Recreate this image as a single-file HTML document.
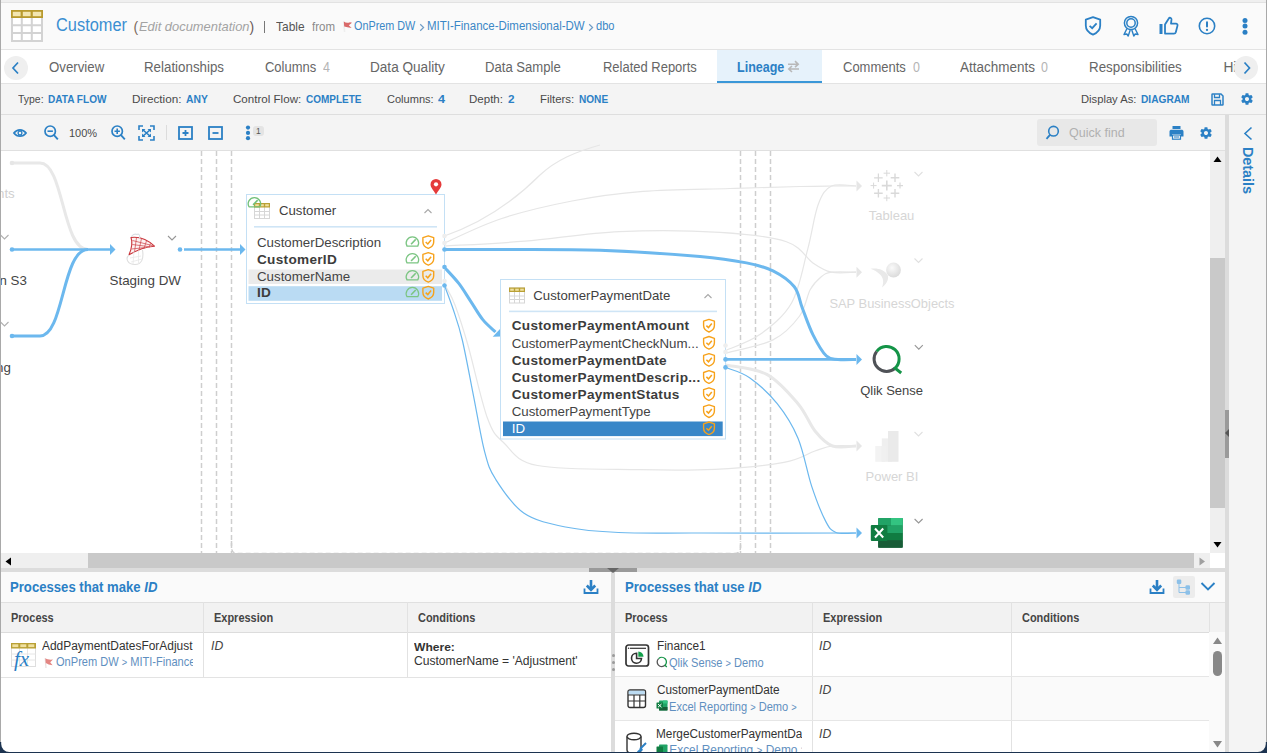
<!DOCTYPE html>
<html><head><meta charset="utf-8">
<style>
*{margin:0;padding:0;box-sizing:border-box}
html,body{width:1267px;height:753px;overflow:hidden;background:#1d3350;font-family:"Liberation Sans",sans-serif}
#app{position:absolute;left:0;top:0;width:1267px;height:753px;background:#fafafa;overflow:hidden}
.a{position:absolute}
.t{position:absolute;white-space:nowrap;line-height:1}
.blue{color:#2b80c5}
.ico{position:absolute;overflow:visible}
</style></head><body>
<div id="app">
  <!-- top strip -->
  <div class="a" style="left:0;top:0;width:1267px;height:2px;background:#efefef"></div>
  <div class="a" style="left:0;top:2px;width:1267px;height:1px;background:#e2e2e2"></div>
  <!-- header -->
  <div class="a" style="left:0;top:3px;width:1267px;height:46px;background:#fafafa"></div>
  <div class="a" style="left:0;top:49px;width:1267px;height:1px;background:#e3e3e3"></div>
  <!-- tab bar -->
  <div class="a" style="left:0;top:50px;width:1267px;height:33px;background:#fff"></div>
  <div class="a" style="left:0;top:83px;width:1267px;height:1px;background:#e3e3e3"></div>
  <!-- filter bar -->
  <div class="a" style="left:0;top:84px;width:1267px;height:30px;background:#f4f4f4"></div>
  <div class="a" style="left:0;top:114px;width:1267px;height:1px;background:#dedede"></div>
  <!-- toolbar -->
  <div class="a" style="left:0;top:115px;width:1225px;height:35px;background:#f4f4f4"></div>
  <div class="a" style="left:0;top:150px;width:1225px;height:1px;background:#e0e0e0"></div>
  <!-- diagram -->
  <div class="a" id="diagram" style="left:0;top:151px;width:1210px;height:402px;background:#fff;overflow:hidden"></div>
<!--DIAGRAM-->
<svg class="ico" style="left:0;top:151px" width="1210" height="402" viewBox="0 151 1210 402">
<line x1="201.5" y1="151" x2="201.5" y2="553" stroke="#cecece" stroke-width="1.5" stroke-dasharray="5 3"/>
<line x1="216.5" y1="151" x2="216.5" y2="553" stroke="#cecece" stroke-width="1.5" stroke-dasharray="5 3"/>
<line x1="231.5" y1="151" x2="231.5" y2="553" stroke="#cecece" stroke-width="1.5" stroke-dasharray="5 3"/>
<line x1="740.5" y1="151" x2="740.5" y2="553" stroke="#cecece" stroke-width="1.5" stroke-dasharray="5 3"/>
<line x1="755.5" y1="151" x2="755.5" y2="553" stroke="#cecece" stroke-width="1.5" stroke-dasharray="5 3"/>
<line x1="770.5" y1="151" x2="770.5" y2="553" stroke="#cecece" stroke-width="1.5" stroke-dasharray="5 3"/>
<path d="M231.5,541 V547 Q231.5,553.5 237.5,553.5 H734.5 Q740.5,553.5 740.5,547 V541" fill="none" stroke="#cecece" stroke-width="1.5" stroke-dasharray="5 3"/>
<path d="M444.5,243.0 C453.9,238.9 479.8,225.7 501.0,218.7 C522.2,211.7 548.3,205.6 572.0,201.0 C595.7,196.4 616.7,193.5 643.0,191.4 C669.3,189.3 703.8,189.3 730.0,188.5 C756.2,187.7 783.1,186.9 800.0,186.5 C816.9,186.1 822.2,186.1 831.5,186.0 C840.8,185.9 851.9,186.0 856.0,186.0" fill="none" stroke="#e6e6e6" stroke-width="1.2"/>
<path d="M444.5,246.0 C457.9,245.2 495.6,243.6 524.7,241.2 C553.9,238.8 586.9,233.2 619.4,231.7 C651.9,230.2 692.2,230.7 720.0,232.4 C747.8,234.1 770.9,236.6 786.4,241.7 C801.9,246.8 805.4,257.8 812.9,262.9 C820.4,268.0 824.3,270.6 831.5,272.2 C838.7,273.8 851.9,272.2 856.0,272.2" fill="none" stroke="#e6e6e6" stroke-width="1.2"/>
<path d="M725.5,350.5 C731.2,347.9 748.8,342.6 759.8,334.6 C770.8,326.6 783.7,316.9 791.7,302.7 C799.7,288.5 803.2,266.0 807.6,249.6 C812.0,233.2 814.2,215.1 818.2,204.5 C822.2,193.9 825.2,189.1 831.5,186.0 C837.8,182.9 851.9,186.0 856.0,186.0" fill="none" stroke="#e6e6e6" stroke-width="1.2"/>
<path d="M725.5,353.2 C733.4,351.0 760.6,346.1 773.0,339.9 C785.4,333.7 793.4,324.4 799.6,316.0 C805.8,307.6 806.7,296.0 810.3,289.5 C813.9,283.0 817.5,279.9 821.0,277.0 C824.5,274.1 825.7,273.0 831.5,272.2 C837.3,271.4 851.9,272.2 856.0,272.2" fill="none" stroke="#e6e6e6" stroke-width="1.2"/>
<path d="M446.0,287.0 C447.5,290.0 451.4,295.3 455.0,305.0 C458.6,314.7 462.5,326.2 467.9,345.0 C473.3,363.8 481.4,401.7 487.4,418.0 C493.4,434.3 495.6,435.1 504.0,443.0 C512.4,450.9 514.9,461.1 537.6,465.5 C560.3,469.9 610.4,469.1 640.0,469.7 C669.6,470.3 691.0,470.5 715.0,469.3 C739.0,468.1 767.3,465.4 784.0,462.4 C800.7,459.3 806.9,453.7 815.0,451.0 C823.1,448.3 825.7,446.8 832.5,446.0 C839.3,445.2 852.1,446.0 856.0,446.0" fill="none" stroke="#e6e6e6" stroke-width="1.2"/>
<path d="M444.5,236 C485,222 515,200 540,175 C556,160 575,152 600,145" fill="none" stroke="#e6e6e6" stroke-width="1.2"/>
<path d="M12,163 H40 C64,163 62,249.5 88,249.5" fill="none" stroke="#e8e8e8" stroke-width="3"/>
<path d="M725.5,365.0 C732.4,366.6 754.7,367.9 766.8,374.3 C778.9,380.8 789.9,394.2 798.0,403.7 C806.1,413.2 809.5,424.2 815.2,431.3 C821.0,438.4 825.7,443.6 832.5,446.0 C839.3,448.4 852.1,446.0 856.0,446.0" fill="none" stroke="#e8e8e8" stroke-width="3"/>
<path d="M856.5,180.5 L862,186 L856.5,191.5 Z" fill="#e6e6e6" transform="rotate(0 862 186)"/>
<path d="M856.5,266.7 L862,272.2 L856.5,277.7 Z" fill="#e6e6e6" transform="rotate(0 862 272.2)"/>
<path d="M856.5,440.5 L862,446 L856.5,451.5 Z" fill="#e6e6e6" transform="rotate(0 862 446)"/>
<path d="M12,336 H40 C64,336 62,249.5 88,249.5" fill="none" stroke="#6cb8ee" stroke-width="3"/>
<path d="M12,249.5 H110" fill="none" stroke="#6cb8ee" stroke-width="2.6"/>
<path d="M110.0,244.0 L115.5,249.5 L110.0,255.0 Z" fill="#6cb8ee" transform="rotate(0 115.5 249.5)"/>
<path d="M184,249.5 H240" fill="none" stroke="#6cb8ee" stroke-width="2.6"/>
<path d="M240.0,244.0 L245.5,249.5 L240.0,255.0 Z" fill="#6cb8ee" transform="rotate(0 245.5 249.5)"/>
<path d="M444.5,249.5 C453.8,249.5 474.1,249.4 500.0,249.5 C525.9,249.6 566.7,249.1 600.0,250.3 C633.3,251.5 675.6,254.4 700.0,256.5 C724.4,258.6 734.3,260.5 746.5,262.9 C758.7,265.3 765.0,266.9 773.0,270.9 C781.0,274.9 789.4,280.6 794.3,286.8 C799.2,293.0 799.2,300.0 802.3,308.0 C805.4,316.0 808.9,326.6 812.9,334.6 C816.9,342.6 822.0,351.7 826.2,355.8 C830.4,359.9 833.0,358.8 838.0,359.4 C843.0,360.0 853.0,359.4 856.0,359.4" fill="none" stroke="#6cb8ee" stroke-width="3"/>
<path d="M445.5,268.5 C447.8,271.0 454.8,278.2 459.0,283.7 C463.2,289.2 466.9,295.6 470.9,301.6 C474.9,307.6 478.7,314.5 482.8,319.6 C486.9,324.7 493.4,329.9 495.5,332.0" fill="none" stroke="#6cb8ee" stroke-width="3"/>
<path d="M495.0,331.0 L500.5,336.5 L495.0,342.0 Z" fill="#6cb8ee" transform="rotate(43 500.5 336.5)"/>
<path d="M725.5,359.4 H856" fill="none" stroke="#6cb8ee" stroke-width="2.6"/>
<path d="M856.5,353.9 L862,359.4 L856.5,364.9 Z" fill="#6cb8ee" transform="rotate(0 862 359.4)"/>
<path d="M444.5,285.5 C445.9,289.4 450.0,299.7 453.0,308.8 C456.0,317.9 458.9,325.5 462.3,340.0 C465.7,354.5 469.8,377.2 473.5,395.8 C477.2,414.4 480.9,437.7 484.6,451.6 C488.3,465.6 489.3,469.3 495.8,479.5 C502.3,489.7 512.1,505.1 523.7,513.0 C535.3,520.9 549.7,523.8 565.5,527.0 C581.3,530.2 596.1,531.5 618.5,532.5 C640.9,533.5 660.4,532.9 700.0,533.0 C739.6,533.1 830.0,533.0 856.0,533.0" fill="none" stroke="#6cb8ee" stroke-width="1.2"/>
<path d="M725.5,367.4 C729.5,369.1 741.0,371.6 749.6,377.7 C758.2,383.8 769.1,393.6 777.2,403.7 C785.3,413.8 792.2,424.4 798.0,438.2 C803.8,452.0 807.2,472.8 811.8,486.6 C816.4,500.4 821.6,513.5 825.6,521.1 C829.6,528.8 830.9,530.5 836.0,532.5 C841.1,534.5 852.7,532.9 856.0,533.0" fill="none" stroke="#6cb8ee" stroke-width="1.2"/>
<path d="M856.5,527.5 L862,533 L856.5,538.5 Z" fill="#6cb8ee" transform="rotate(0 862 533)"/>
<rect x="246.5" y="194.5" width="198" height="109" fill="#fff" stroke="#c4e0f5" stroke-width="1"/>
<g transform="translate(254,203)"><rect x="0.5" y="0.5" width="15" height="15" fill="#fff" stroke="#d6d6d6"/><path d="M5.5,4V15.5M10.5,4V15.5M0.5,8.5H15.5M0.5,12H15.5" stroke="#d6d6d6" stroke-width="1"/><rect x="0" y="0" width="16" height="4.5" fill="#b9a035"/><rect x="1.2" y="1.2" width="3.6" height="2.1" fill="#efe0a0"/><rect x="6.2" y="1.2" width="3.6" height="2.1" fill="#efe0a0"/><rect x="11.2" y="1.2" width="3.6" height="2.1" fill="#efe0a0"/></g>
<g transform="translate(247.5,197.5)" fill="none" stroke="#72c07a" stroke-width="1.3"><path d="M1.5,9.3 A6.2,6.2 0 1 1 12.3,9.3 Z" stroke-linejoin="round"/><path d="M5.6,7.4 L10.2,2.6" stroke-width="1.6"/></g>
<text x="279" y="215.3" font-size="13.2" fill="#404040" font-family="Liberation Sans, sans-serif">Customer</text>
<path d="M424.5,213 L428,209.5 L431.5,213" fill="none" stroke="#a8a8a8" stroke-width="1.1"/>
<rect x="254" y="226" width="183" height="1.6" fill="#cfe5f6"/>
<rect x="248.5" y="269.5" width="193.5" height="14.5" fill="#ebebeb"/>
<rect x="248.5" y="286.2" width="193.5" height="14.6" fill="#badbf3"/>
<text x="257" y="246.8" font-size="13.3" fill="#444" font-family="Liberation Sans, sans-serif">CustomerDescription</text>
<g transform="translate(405.5,236.8)" fill="none" stroke="#7cc583" stroke-width="1.3"><path d="M1.5,9.3 A6.2,6.2 0 1 1 12.3,9.3 Z" stroke-linejoin="round"/><path d="M5.6,7.4 L10.2,2.6" stroke-width="1.6"/></g>
<g transform="translate(422.3,235.0)" fill="none" stroke="#f7a21b" stroke-width="1.4"><path d="M6,0.8 L11.4,2.6 V7 C11.4,10.2 9.2,12.3 6,13.4 C2.8,12.3 0.6,10.2 0.6,7 V2.6 Z" stroke-linejoin="round"/><path d="M3.4,7 L5.5,9 L8.8,5" stroke-width="1.5"/></g>
<text x="257" y="263.6" font-size="13.6" font-weight="bold" fill="#3c3c3c" font-family="Liberation Sans, sans-serif" letter-spacing="0.3">CustomerID</text>
<g transform="translate(405.5,253.60000000000002)" fill="none" stroke="#7cc583" stroke-width="1.3"><path d="M1.5,9.3 A6.2,6.2 0 1 1 12.3,9.3 Z" stroke-linejoin="round"/><path d="M5.6,7.4 L10.2,2.6" stroke-width="1.6"/></g>
<g transform="translate(422.3,251.8)" fill="none" stroke="#f7a21b" stroke-width="1.4"><path d="M6,0.8 L11.4,2.6 V7 C11.4,10.2 9.2,12.3 6,13.4 C2.8,12.3 0.6,10.2 0.6,7 V2.6 Z" stroke-linejoin="round"/><path d="M3.4,7 L5.5,9 L8.8,5" stroke-width="1.5"/></g>
<text x="257" y="280.6" font-size="13.3" fill="#444" font-family="Liberation Sans, sans-serif">CustomerName</text>
<g transform="translate(405.5,270.6)" fill="none" stroke="#7cc583" stroke-width="1.3"><path d="M1.5,9.3 A6.2,6.2 0 1 1 12.3,9.3 Z" stroke-linejoin="round"/><path d="M5.6,7.4 L10.2,2.6" stroke-width="1.6"/></g>
<g transform="translate(422.3,268.8)" fill="none" stroke="#f7a21b" stroke-width="1.4"><path d="M6,0.8 L11.4,2.6 V7 C11.4,10.2 9.2,12.3 6,13.4 C2.8,12.3 0.6,10.2 0.6,7 V2.6 Z" stroke-linejoin="round"/><path d="M3.4,7 L5.5,9 L8.8,5" stroke-width="1.5"/></g>
<text x="257" y="297.4" font-size="13.6" font-weight="bold" fill="#3c3c3c" font-family="Liberation Sans, sans-serif" letter-spacing="0.3">ID</text>
<g transform="translate(405.5,287.4)" fill="none" stroke="#7cc583" stroke-width="1.3"><path d="M1.5,9.3 A6.2,6.2 0 1 1 12.3,9.3 Z" stroke-linejoin="round"/><path d="M5.6,7.4 L10.2,2.6" stroke-width="1.6"/></g>
<g transform="translate(422.3,285.59999999999997)" fill="none" stroke="#f7a21b" stroke-width="1.4"><path d="M6,0.8 L11.4,2.6 V7 C11.4,10.2 9.2,12.3 6,13.4 C2.8,12.3 0.6,10.2 0.6,7 V2.6 Z" stroke-linejoin="round"/><path d="M3.4,7 L5.5,9 L8.8,5" stroke-width="1.5"/></g>
<rect x="500.5" y="279.5" width="225" height="159.5" fill="#fff" stroke="#c4e0f5" stroke-width="1"/>
<g transform="translate(509,287.5)"><rect x="0.5" y="0.5" width="15" height="15" fill="#fff" stroke="#d6d6d6"/><path d="M5.5,4V15.5M10.5,4V15.5M0.5,8.5H15.5M0.5,12H15.5" stroke="#d6d6d6" stroke-width="1"/><rect x="0" y="0" width="16" height="4.5" fill="#b9a035"/><rect x="1.2" y="1.2" width="3.6" height="2.1" fill="#efe0a0"/><rect x="6.2" y="1.2" width="3.6" height="2.1" fill="#efe0a0"/><rect x="11.2" y="1.2" width="3.6" height="2.1" fill="#efe0a0"/></g>
<text x="533.3" y="299.8" font-size="13.2" fill="#404040" font-family="Liberation Sans, sans-serif">CustomerPaymentDate</text>
<path d="M704.5,298 L708,294.5 L711.5,298" fill="none" stroke="#a8a8a8" stroke-width="1.1"/>
<rect x="509" y="310.6" width="208" height="1.6" fill="#cfe5f6"/>
<rect x="503" y="421.5" width="219.7" height="14.6" fill="#3987c8"/>
<text x="511.7" y="330.4" font-size="13.6" font-weight="bold" fill="#3c3c3c" font-family="Liberation Sans, sans-serif" letter-spacing="0.3">CustomerPaymentAmount</text>
<g transform="translate(703,318.59999999999997)" fill="none" stroke="#f7a21b" stroke-width="1.4"><path d="M6,0.8 L11.4,2.6 V7 C11.4,10.2 9.2,12.3 6,13.4 C2.8,12.3 0.6,10.2 0.6,7 V2.6 Z" stroke-linejoin="round"/><path d="M3.4,7 L5.5,9 L8.8,5" stroke-width="1.5"/></g>
<text x="511.7" y="347.5" font-size="13.3" fill="#444" font-family="Liberation Sans, sans-serif">CustomerPaymentCheckNum...</text>
<g transform="translate(703,335.7)" fill="none" stroke="#f7a21b" stroke-width="1.4"><path d="M6,0.8 L11.4,2.6 V7 C11.4,10.2 9.2,12.3 6,13.4 C2.8,12.3 0.6,10.2 0.6,7 V2.6 Z" stroke-linejoin="round"/><path d="M3.4,7 L5.5,9 L8.8,5" stroke-width="1.5"/></g>
<text x="511.7" y="364.6" font-size="13.6" font-weight="bold" fill="#3c3c3c" font-family="Liberation Sans, sans-serif" letter-spacing="0.3">CustomerPaymentDate</text>
<g transform="translate(703,352.79999999999995)" fill="none" stroke="#f7a21b" stroke-width="1.4"><path d="M6,0.8 L11.4,2.6 V7 C11.4,10.2 9.2,12.3 6,13.4 C2.8,12.3 0.6,10.2 0.6,7 V2.6 Z" stroke-linejoin="round"/><path d="M3.4,7 L5.5,9 L8.8,5" stroke-width="1.5"/></g>
<text x="511.7" y="381.7" font-size="13.6" font-weight="bold" fill="#3c3c3c" font-family="Liberation Sans, sans-serif" letter-spacing="0.3">CustomerPaymentDescrip...</text>
<g transform="translate(703,369.9)" fill="none" stroke="#f7a21b" stroke-width="1.4"><path d="M6,0.8 L11.4,2.6 V7 C11.4,10.2 9.2,12.3 6,13.4 C2.8,12.3 0.6,10.2 0.6,7 V2.6 Z" stroke-linejoin="round"/><path d="M3.4,7 L5.5,9 L8.8,5" stroke-width="1.5"/></g>
<text x="511.7" y="398.8" font-size="13.6" font-weight="bold" fill="#3c3c3c" font-family="Liberation Sans, sans-serif" letter-spacing="0.3">CustomerPaymentStatus</text>
<g transform="translate(703,386.99999999999994)" fill="none" stroke="#f7a21b" stroke-width="1.4"><path d="M6,0.8 L11.4,2.6 V7 C11.4,10.2 9.2,12.3 6,13.4 C2.8,12.3 0.6,10.2 0.6,7 V2.6 Z" stroke-linejoin="round"/><path d="M3.4,7 L5.5,9 L8.8,5" stroke-width="1.5"/></g>
<text x="511.7" y="415.9" font-size="13.3" fill="#444" font-family="Liberation Sans, sans-serif">CustomerPaymentType</text>
<g transform="translate(703,404.09999999999997)" fill="none" stroke="#f7a21b" stroke-width="1.4"><path d="M6,0.8 L11.4,2.6 V7 C11.4,10.2 9.2,12.3 6,13.4 C2.8,12.3 0.6,10.2 0.6,7 V2.6 Z" stroke-linejoin="round"/><path d="M3.4,7 L5.5,9 L8.8,5" stroke-width="1.5"/></g>
<text x="511.7" y="433.0" font-size="13.3" fill="#fff" font-family="Liberation Sans, sans-serif">ID</text>
<g transform="translate(703,421.2)" fill="none" stroke="#f7a21b" stroke-width="1.4"><path d="M6,0.8 L11.4,2.6 V7 C11.4,10.2 9.2,12.3 6,13.4 C2.8,12.3 0.6,10.2 0.6,7 V2.6 Z" stroke-linejoin="round"/><path d="M3.4,7 L5.5,9 L8.8,5" stroke-width="1.5"/></g>
<path d="M436,194.5 C433.5,190 430.5,187.5 430.5,184.5 A5.5,5.5 0 1 1 441.5,184.5 C441.5,187.5 438.5,190 436,194.5Z" fill="#e53b3b"/><circle cx="436" cy="184.3" r="2.1" fill="#fff"/>
<text x="-3" y="197.5" font-size="13.3" fill="#d0d0d0" font-family="Liberation Sans, sans-serif">nts</text>
<text x="-0.5" y="284.7" font-size="13.3" fill="#444" font-family="Liberation Sans, sans-serif">n S3</text>
<text x="-4" y="371.8" font-size="13.3" fill="#444" font-family="Liberation Sans, sans-serif">ng</text>
<path d="M0.5,235 L4.5,239 L8.5,235" fill="none" stroke="#b0b0b0" stroke-width="1.1"/>
<path d="M0.5,322 L4.5,326 L8.5,322" fill="none" stroke="#b0b0b0" stroke-width="1.1"/>
<g><path d="M131,237.5 C139,236.5 148,240 154.5,246.2 C146,246.8 137,250 129,254.8 C131.5,249 133,243 131,237.5Z" fill="#fdf3f3" stroke="#c9343a" stroke-width="1.1" stroke-linejoin="round"/><path d="M132.5,240.5 L154,246 M132.3,244.5 L150,246.8 M131.6,249 L145,247.5 M136.5,237.6 L134.5,252 M141.5,238.5 L139,250 M146.5,240.8 L144,248.5 M150.5,243.2 L149,247.5" stroke="#cf4a50" stroke-width="0.75"/><path d="M129,254.8 C125,258.5 127.5,264.5 135,264.5 C141.5,264.5 144,259 142.5,250" fill="none" stroke="#dedede" stroke-width="1.1"/><path d="M130,258 L141,256 M131,262 L142,259 M134,251.5 L133,264 M138.5,250.5 L138.5,264" stroke="#e8e8e8" stroke-width="0.8"/><path d="M131.5,237 C132,234.5 135,233.5 137,234.5 C138.5,233.5 140.5,235 139.5,238" fill="none" stroke="#d8dde2" stroke-width="1.1"/></g>
<text x="109.5" y="285.3" font-size="13.4" fill="#444" font-family="Liberation Sans, sans-serif">Staging DW</text>
<path d="M168,236 L172,240 L176,236" fill="none" stroke="#969696" stroke-width="1.1"/>
<path d="M881.8,185.6H891.8M886.8,180.6V190.6" stroke="#d9d9d9" stroke-width="1.6"/>
<path d="M883.5999999999999,173.2H890.0M886.8,170.0V176.39999999999998" stroke="#d9d9d9" stroke-width="1"/>
<path d="M883.5999999999999,198H890.0M886.8,194.8V201.2" stroke="#d9d9d9" stroke-width="1"/>
<path d="M870.6,185.6H876.6M873.6,182.6V188.6" stroke="#d9d9d9" stroke-width="1"/>
<path d="M897,185.6H903M900,182.6V188.6" stroke="#d9d9d9" stroke-width="1.2"/>
<path d="M874.1,177.8H882.6999999999999M878.4,173.5V182.10000000000002" stroke="#d9d9d9" stroke-width="1.2"/>
<path d="M890.7,177.8H899.3M895,173.5V182.10000000000002" stroke="#d9d9d9" stroke-width="1.4"/>
<path d="M874.1,193.3H882.6999999999999M878.4,189.0V197.60000000000002" stroke="#d9d9d9" stroke-width="1.4"/>
<path d="M890.7,193.3H899.3M895,189.0V197.60000000000002" stroke="#d9d9d9" stroke-width="1.4"/>
<text x="868.8" y="220.4" font-size="13" fill="#d6d6d6" font-family="Liberation Sans, sans-serif">Tableau</text>
<path d="M914.5,172 L918.5,176 L922.5,172" fill="none" stroke="#e0e0e0" stroke-width="1.1"/>
<defs><radialGradient id="sph" cx="0.4" cy="0.35" r="0.7"><stop offset="0" stop-color="#fafafa"/><stop offset="1" stop-color="#d9d9d9"/></radialGradient></defs>
<path d="M870.5,268.8 C877,267.5 884,269.5 887.5,274.5 C889,277.5 888,283 882,287.5 C884,282 883.5,278 880,274.5 C877.5,272 874,270 870.5,268.8Z" fill="#e9e9e9"/>
<circle cx="893.5" cy="270" r="7.4" fill="url(#sph)"/>
<text x="829.4" y="307.7" font-size="12.9" fill="#d6d6d6" font-family="Liberation Sans, sans-serif">SAP BusinessObjects</text>
<path d="M914.5,258.5 L918.5,262.5 L922.5,258.5" fill="none" stroke="#e0e0e0" stroke-width="1.1"/>
<path d="M876.7,351.3 A12.5,12.5 0 0 0 895.1,368.1" fill="none" stroke="#4f5257" stroke-width="3"/>
<path d="M876.7,351.3 A12.5,12.5 0 1 1 895.1,368.1 L901.2,373" fill="none" stroke="#149447" stroke-width="3"/>
<text x="860.2" y="394.6" font-size="13" fill="#444" font-family="Liberation Sans, sans-serif">Qlik Sense</text>
<path d="M914.8,345.2 L918.8,349.2 L922.8,345.2" fill="none" stroke="#969696" stroke-width="1.1"/>
<rect x="875.3" y="446" width="10" height="15.8" fill="#f3f3f3"/><rect x="881.8" y="438.4" width="10" height="23.4" fill="#efefef"/><rect x="888" y="431" width="10.5" height="30.8" fill="#eaeaea"/><rect x="881.8" y="446" width="3.5" height="15.8" fill="#f0f0f0"/>
<text x="865.6" y="481.3" font-size="13" fill="#d6d6d6" font-family="Liberation Sans, sans-serif">Power BI</text>
<path d="M914.5,432 L918.5,436 L922.5,432" fill="none" stroke="#e0e0e0" stroke-width="1.1"/>
<g><rect x="878.2" y="518" width="24.5" height="29.7" rx="1.5" fill="#1d6f42"/><rect x="878.2" y="518" width="24.5" height="7.5" fill="#21a366"/><rect x="891" y="518" width="11.7" height="7.5" fill="#33c481"/><rect x="878.2" y="525.5" width="24.5" height="7.5" fill="#21a366"/><rect x="878.2" y="533" width="24.5" height="7.3" fill="#107c41"/><rect x="878.2" y="540.3" width="24.5" height="7.4" fill="#185c37"/><rect x="870.8" y="525" width="16.6" height="16" rx="1" fill="#107c41"/><path d="M875,528.5 L883.2,537.5 M883.2,528.5 L875,537.5" stroke="#fff" stroke-width="2"/></g>
<path d="M914.6,519 L918.6,523 L922.6,519" fill="none" stroke="#969696" stroke-width="1.1"/>
<circle cx="12" cy="163" r="2.3" fill="#e6e6e6"/>
<circle cx="12" cy="249.5" r="2.3" fill="#6cb8ee"/>
<circle cx="12" cy="336" r="2.3" fill="#6cb8ee"/>
<circle cx="180" cy="249.5" r="2.3" fill="#6cb8ee"/>
<circle cx="444.5" cy="236" r="2.3" fill="#eeeeee"/>
<circle cx="444.5" cy="243" r="2.3" fill="#eeeeee"/>
<circle cx="444.5" cy="249.5" r="2.3" fill="#6cb8ee"/>
<circle cx="444.5" cy="267" r="2.3" fill="#6cb8ee"/>
<circle cx="444.5" cy="281" r="2.3" fill="#eeeeee"/>
<circle cx="444.5" cy="285.5" r="2.3" fill="#6cb8ee"/>
<circle cx="725.5" cy="345.5" r="2.3" fill="#eeeeee"/>
<circle cx="725.5" cy="352" r="2.3" fill="#eeeeee"/>
<circle cx="725.5" cy="359.4" r="2.3" fill="#6cb8ee"/>
<circle cx="725.5" cy="367.4" r="2.3" fill="#6cb8ee"/></svg>
<!--/DIAGRAM-->
  <!-- v scrollbar -->
  <div class="a" style="left:1210px;top:151px;width:15px;height:402px;background:#efefef"></div>
  <div class="a" style="left:1210px;top:258px;width:15px;height:250px;background:#c9c9c9"></div>
  <!-- h scrollbar -->
  <div class="a" style="left:0;top:553px;width:1210px;height:15px;background:#efefef"></div>
  <div class="a" style="left:88px;top:553px;width:1106px;height:15px;background:#c9c9c9"></div>
  <div class="a" style="left:1210px;top:553px;width:15px;height:15px;background:#fff"></div>

  <!-- scroll arrows -->
  <svg class="ico" style="left:1212px;top:155px" width="11" height="8" viewBox="0 0 11 8"><path d="M1.5 7H9.5L5.5 1.5Z" fill="#000"/></svg>
  <svg class="ico" style="left:1212px;top:541px" width="11" height="8" viewBox="0 0 11 8"><path d="M1.5 1H9.5L5.5 6.5Z" fill="#000"/></svg>
  <svg class="ico" style="left:4px;top:556px" width="8" height="11" viewBox="0 0 8 11"><path d="M7 1.5V9.5L1.5 5.5Z" fill="#000"/></svg>
  <div class="a" style="left:1194px;top:553px;width:16px;height:15px;background:#efefef"></div>
  <svg class="ico" style="left:1198px;top:556px" width="8" height="11" viewBox="0 0 8 11"><path d="M1.5 1.5V9.5L7 5.5Z" fill="#a0a0a0"/></svg>
  <!-- splitters -->
  <div class="a" style="left:0;top:568px;width:1225px;height:4px;background:#dcdcdc"></div>
  <div class="a" style="left:589px;top:568px;width:48px;height:4px;background:#9a9a9a"></div>
  <div class="a" style="left:1225px;top:115px;width:4px;height:638px;background:#dcdcdc"></div>
  <div class="a" style="left:611px;top:572px;width:4px;height:181px;background:#dcdcdc"></div>
  <div class="a" style="left:1225px;top:410px;width:4px;height:48px;background:#9a9a9a"></div>
  <svg class="ico" style="left:1225px;top:428px" width="4" height="10" viewBox="0 0 4 10"><path d="M4 1L0 5L4 9Z" fill="#555"/></svg>
  <!-- details panel -->
  <div class="a" style="left:1229px;top:115px;width:38px;height:638px;background:#f4f4f4"></div>
  <!-- bottom panels -->
  <div class="a" style="left:0;top:572px;width:611px;height:181px;background:#fafafa"></div>
  <div class="a" style="left:615px;top:572px;width:610px;height:181px;background:#fafafa"></div>

<!--BOTTOM-->
<div class="a" style="left:1px;top:572px;width:610px;height:30.5px;background:#fafafa;"></div>
<div class="a" style="left:1px;top:602px;width:610px;height:151px;background:#fff;"></div>
<div class="t" style="left:10px;top:579.20px;font-size:15px;color:#2b80c5;font-weight:bold;font-style:normal;transform:scaleX(0.875);transform-origin:0 0;">Processes that make <i>ID</i></div>
<svg class="ico" style="left:583px;top:579px" width="16" height="16" viewBox="0 0 16 16"><path d="M8 1V10.5M3.8 6.5L8 10.8L12.2 6.5" fill="none" stroke="#2b80c5" stroke-width="2.6"/><path d="M1.5 9.5V14H14.5V9.5" fill="none" stroke="#2b80c5" stroke-width="1.8"/></svg>
<div class="a" style="left:1px;top:602px;width:610px;height:30px;background:#f2f2f2;"></div>
<div class="a" style="left:1px;top:602px;width:610px;height:1px;background:#e0e0e0;"></div>
<div class="a" style="left:1px;top:632px;width:610px;height:1px;background:#dcdcdc;"></div>
<div class="a" style="left:203px;top:602px;width:1px;height:75px;background:#e2e2e2;"></div>
<div class="a" style="left:407px;top:602px;width:1px;height:75px;background:#e2e2e2;"></div>
<div class="t" style="left:11.4px;top:612.27px;font-size:12.2px;color:#454545;font-weight:bold;font-style:normal;transform:scaleX(0.9);transform-origin:0 0;">Process</div>
<div class="t" style="left:213.5px;top:612.47px;font-size:12.2px;color:#454545;font-weight:bold;font-style:normal;transform:scaleX(0.9);transform-origin:0 0;">Expression</div>
<div class="t" style="left:418px;top:612.47px;font-size:12.2px;color:#454545;font-weight:bold;font-style:normal;transform:scaleX(0.9);transform-origin:0 0;">Conditions</div>
<div class="a" style="left:1px;top:677px;width:610px;height:1px;background:#e3e3e3;"></div>
<svg class="ico" style="left:11px;top:643px" width="25" height="24" viewBox="0 0 25 24">
<rect x="0.5" y="0.5" width="24" height="23" fill="#fff" stroke="#dedede"/>
<path d="M0.5 11H24.5M0.5 17H24.5M8.5 5V23.5M16.5 5V23.5" stroke="#e6e6e6" stroke-width="1"/>
<rect x="0" y="0" width="25" height="5.5" fill="#b9a035"/><rect x="1.3" y="1.3" width="6" height="2.8" fill="#efe0a0"/><rect x="9.3" y="1.3" width="6" height="2.8" fill="#efe0a0"/><rect x="17.3" y="1.3" width="6" height="2.8" fill="#efe0a0"/>
<text x="3" y="22.5" font-family="Liberation Serif, serif" font-style="italic" font-size="21" fill="#2b80c5">fx</text>
</svg>
<div class="a" style="left:42px;top:636px;width:151px;height:36px;overflow:hidden">
<div class="t" style="left:0.1px;top:3.79px;font-size:12.3px;color:#333;font-weight:normal;font-style:normal;transform:scaleX(0.97);transform-origin:0 0;">AddPaymentDatesForAdjust</div>
<svg class="ico" style="left:2px;top:21px" width="10" height="12" viewBox="0 0 10 12"><path d="M1.2 1L2 11" stroke="#eadede" stroke-width="1.2"/><path d="M1.4 1.5Q4 3 9 2.5L6.2 5.2L8.6 8.2Q4.2 7.8 1.8 6Z" fill="#d9534f" opacity=".7"/></svg>
<div class="t" style="left:13.5px;top:20.73px;font-size:11.9px;color:#5f8fc0;font-weight:normal;font-style:normal;transform:scaleX(0.93);transform-origin:0 0;">OnPrem DW <span style="font-size:10px">&gt;</span> MITI-Finance-Dimensional-DW</div>
</div>
<div class="t" style="left:211px;top:639.96px;font-size:12.8px;color:#444;font-weight:normal;font-style:italic;transform:scaleX(0.95);transform-origin:0 0;">ID</div>
<div class="t" style="left:414px;top:640.78px;font-size:11.6px;color:#333;font-weight:bold;font-style:normal;transform:scaleX(1.04);transform-origin:0 0;">Where:</div>
<div class="t" style="left:414px;top:655.16px;font-size:12.1px;color:#333;font-weight:normal;font-style:normal;">CustomerName = 'Adjustment'</div>
<div class="a" style="left:611.5px;top:653.5px;width:3px;height:3px;border-radius:50%;background:#9a9a9a"></div>
<div class="a" style="left:611.5px;top:660.5px;width:3px;height:3px;border-radius:50%;background:#9a9a9a"></div>
<div class="a" style="left:611.5px;top:667.5px;width:3px;height:3px;border-radius:50%;background:#9a9a9a"></div>
<svg class="ico" style="left:606px;top:568px" width="14" height="6" viewBox="0 0 14 6"><path d="M1 0H13L7 5Z" fill="#666"/></svg>
<div class="a" style="left:615px;top:572px;width:610px;height:30.5px;background:#fafafa;"></div>
<div class="a" style="left:615px;top:602px;width:594px;height:151px;background:#fff;"></div>
<div class="t" style="left:624.5px;top:579.20px;font-size:15px;color:#2b80c5;font-weight:bold;font-style:normal;transform:scaleX(0.875);transform-origin:0 0;">Processes that use <i>ID</i></div>
<svg class="ico" style="left:1149px;top:579px" width="16" height="16" viewBox="0 0 16 16"><path d="M8 1V10.5M3.8 6.5L8 10.8L12.2 6.5" fill="none" stroke="#2b80c5" stroke-width="2.6"/><path d="M1.5 9.5V14H14.5V9.5" fill="none" stroke="#2b80c5" stroke-width="1.8"/></svg>
<div class="a" style="left:1173px;top:576px;width:22px;height:22px;background:#ececec;border-radius:2px"></div>
<svg class="ico" style="left:1176px;top:579px" width="16" height="16" viewBox="0 0 16 16"><path d="M3 3V13.5H10M3 8.5H10" fill="none" stroke="#8cc0e8" stroke-width="1"/><rect x="0.8" y="0.5" width="4.5" height="4.5" rx="1.2" fill="#8cc0e8"/><rect x="9.5" y="6.3" width="4.5" height="4.5" rx="1.2" fill="#8cc0e8"/><rect x="9.5" y="11.2" width="4.5" height="4.5" rx="1.2" fill="#8cc0e8"/></svg>
<svg class="ico" style="left:1200px;top:581px" width="16" height="11" viewBox="0 0 16 11"><path d="M1.5 2L8 8.5L14.5 2" fill="none" stroke="#2b80c5" stroke-width="1.9"/></svg>
<div class="a" style="left:615px;top:602px;width:610px;height:30px;background:#f2f2f2;"></div>
<div class="a" style="left:615px;top:602px;width:610px;height:1px;background:#e0e0e0;"></div>
<div class="a" style="left:615px;top:632px;width:594px;height:1px;background:#dcdcdc;"></div>
<div class="a" style="left:812px;top:602px;width:1px;height:151px;background:#e2e2e2;"></div>
<div class="a" style="left:1011px;top:602px;width:1px;height:151px;background:#e2e2e2;"></div>
<div class="a" style="left:1209px;top:602px;width:1px;height:30px;background:#e2e2e2;"></div>
<div class="t" style="left:625px;top:612.27px;font-size:12.2px;color:#454545;font-weight:bold;font-style:normal;transform:scaleX(0.9);transform-origin:0 0;">Process</div>
<div class="t" style="left:822.5px;top:612.47px;font-size:12.2px;color:#454545;font-weight:bold;font-style:normal;transform:scaleX(0.9);transform-origin:0 0;">Expression</div>
<div class="t" style="left:1022px;top:612.47px;font-size:12.2px;color:#454545;font-weight:bold;font-style:normal;transform:scaleX(0.9);transform-origin:0 0;">Conditions</div>
<div class="a" style="left:615px;top:676px;width:594px;height:1px;background:#e6e6e6;"></div>
<div class="a" style="left:615px;top:677px;width:594px;height:43px;background:#fafafa;"></div>
<div class="a" style="left:812px;top:677px;width:1px;height:43px;background:#e2e2e2;"></div>
<div class="a" style="left:1011px;top:677px;width:1px;height:43px;background:#e2e2e2;"></div>
<div class="a" style="left:615px;top:720px;width:594px;height:1px;background:#e6e6e6;"></div>
<div class="a" style="left:1210px;top:632px;width:15px;height:121px;background:#fafafa;"></div>
<svg class="ico" style="left:1212px;top:636px" width="11" height="9" viewBox="0 0 11 9"><path d="M1 8H10L5.5 1.5Z" fill="#888"/></svg>
<div class="a" style="left:1213px;top:651px;width:9px;height:25px;background:#888;border-radius:4.5px"></div>
<svg class="ico" style="left:1212px;top:740px" width="11" height="9" viewBox="0 0 11 9"><path d="M1 1H10L5.5 7.5Z" fill="#888"/></svg>
<svg class="ico" style="left:625px;top:644px" width="25" height="23" viewBox="0 0 25 23">
<rect x="1" y="1" width="22.5" height="21" rx="2.5" fill="none" stroke="#333" stroke-width="1.7"/>
<path d="M5 4.3H21" stroke="#333" stroke-width="1.2"/><circle cx="3.6" cy="4.3" r="0.8" fill="#333"/>
<path d="M11.6 9.2A5 5 0 1 0 16.5 14.5H11.6Z" fill="none" stroke="#333" stroke-width="1.6"/>
<path d="M13.3 7.5V12.8H18.5A5.3 5.3 0 0 0 13.3 7.5Z" fill="#12a04a"/>
</svg>
<div class="t" style="left:656.7px;top:639.99px;font-size:12.3px;color:#333;font-weight:normal;font-style:normal;transform:scaleX(0.96);transform-origin:0 0;">Finance1</div>
<svg class="ico" style="left:656px;top:656px" width="12" height="12" viewBox="0 0 12 12"><path d="M2.6 2.6A4.3 4.3 0 1 0 9 9.3" fill="none" stroke="#555" stroke-width="1.3"/><path d="M2.6 2.6A4.3 4.3 0 1 1 9 9.3L10.8 11" fill="none" stroke="#149447" stroke-width="1.3"/></svg>
<div class="t" style="left:669.3px;top:657.73px;font-size:11.9px;color:#5f8fc0;font-weight:normal;font-style:normal;transform:scaleX(0.93);transform-origin:0 0;">Qlik Sense <span style="font-size:10px">&gt;</span> Demo</div>
<div class="t" style="left:819.4px;top:639.86px;font-size:12.8px;color:#444;font-weight:normal;font-style:italic;transform:scaleX(0.95);transform-origin:0 0;">ID</div>
<svg class="ico" style="left:627px;top:689px" width="20" height="20" viewBox="0 0 20 20">
<rect x="1" y="1" width="17.5" height="17.5" rx="2" fill="#fff" stroke="#333" stroke-width="1.4"/>
<rect x="1.7" y="1.7" width="16" height="4" fill="#bcdcf3"/>
<path d="M1 6H18.5M1 12H18.5M7 6V18.5M12.8 6V18.5" stroke="#333" stroke-width="1.2"/>
</svg>
<div class="t" style="left:656.7px;top:683.99px;font-size:12.3px;color:#333;font-weight:normal;font-style:normal;transform:scaleX(0.96);transform-origin:0 0;">CustomerPaymentDate</div>
<svg class="ico" style="left:656px;top:700px" width="12" height="11" viewBox="0 0 12 11"><rect x="3" y="0.5" width="8.5" height="10" rx="0.8" fill="#21a366"/><rect x="7" y="0.5" width="4.5" height="3" fill="#33c481"/><rect x="3" y="7" width="8.5" height="3.5" fill="#185c37"/><rect x="0.5" y="2.5" width="6.5" height="6" rx="0.5" fill="#107c41"/><path d="M2 4L5.5 7.2M5.5 4L2 7.2" stroke="#fff" stroke-width="1"/></svg>
<div class="t" style="left:669.3px;top:701.83px;font-size:11.9px;color:#5f8fc0;font-weight:normal;font-style:normal;transform:scaleX(0.93);transform-origin:0 0;">Excel Reporting <span style="font-size:10px">&gt;</span> Demo <span style="font-size:10px">&gt;</span></div>
<div class="t" style="left:819.4px;top:683.66px;font-size:12.8px;color:#444;font-weight:normal;font-style:italic;transform:scaleX(0.95);transform-origin:0 0;">ID</div>
<svg class="ico" style="left:625px;top:732px" width="24" height="22" viewBox="0 0 24 22">
<path d="M2 4.5V18C2 20 5 21.5 9 21.5S16 20 16 18V4.5" fill="none" stroke="#333" stroke-width="1.4"/>
<ellipse cx="9" cy="4.5" rx="7" ry="3.2" fill="#fff" stroke="#333" stroke-width="1.4"/>
<path d="M21 11L15 17" stroke="#2b80c5" stroke-width="2"/><path d="M16.5 15.5L12 19.5L13.5 21.5L18 18Z" fill="#2b80c5"/>
</svg>
<div class="a" style="left:656px;top:722px;width:146px;height:31px;overflow:hidden">
<div class="t" style="left:0.1px;top:5.59px;font-size:12.3px;color:#333;font-weight:normal;font-style:normal;transform:scaleX(0.96);transform-origin:0 0;">MergeCustomerPaymentDate</div>
<svg class="ico" style="left:0px;top:22px" width="12" height="11" viewBox="0 0 12 11"><rect x="3" y="0.5" width="8.5" height="10" rx="0.8" fill="#21a366"/><rect x="0.5" y="2.5" width="6.5" height="6" rx="0.5" fill="#107c41"/></svg>
<div class="t" style="left:13.3px;top:22.93px;font-size:11.9px;color:#5f8fc0;font-weight:normal;font-style:normal;">Excel Reporting <span style="font-size:10px">&gt;</span> Demo <span style="font-size:10px">&gt;</span></div>
</div>
<div class="t" style="left:819.4px;top:727.86px;font-size:12.8px;color:#444;font-weight:normal;font-style:italic;transform:scaleX(0.95);transform-origin:0 0;">ID</div>
<!--/BOTTOM-->
  <!-- HEADER CONTENT -->
<svg class="ico" style="left:11px;top:10px" width="32" height="32" viewBox="0 0 32 32">
    <rect x="0" y="0" width="32" height="32" fill="#fff"/>
    <path d="M1 8V31H31V8M10.8 8V31M20.8 8V31M1 15.3H31M1 23H31" stroke="#d3d3d3" stroke-width="2" fill="none"/>
    <rect x="0" y="0" width="32" height="8" fill="#b89a2e"/>
    <rect x="1.8" y="1.8" width="7.8" height="4.4" fill="#f3e6b0"/>
    <rect x="11.8" y="1.8" width="7.8" height="4.4" fill="#f3e6b0"/>
    <rect x="21.8" y="1.8" width="8.4" height="4.4" fill="#f3e6b0"/>
  </svg>
<div class="t" style="left:55.9px;top:17.39px;font-size:17.5px;color:#3a8fd2;transform:scaleX(0.936);transform-origin:0 0;">Customer</div>
<div class="t" style="left:133.5px;top:19.65px;font-size:14px;color:#7a6a5a;transform:scaleX(1.000);transform-origin:0 0;">(</div>
<div class="t" style="left:138.5px;top:19.57px;font-size:13.5px;color:#a3a3a3;font-style:italic;transform:scaleX(0.956);transform-origin:0 0;">Edit documentation</div>
<div class="t" style="left:249.5px;top:19.65px;font-size:14px;color:#6a5a5a;transform:scaleX(1.000);transform-origin:0 0;">)</div>
<div class="a" style="left:264px;top:21px;width:1.2px;height:12px;background:#777"></div>
<div class="t" style="left:276px;top:19.57px;font-size:13.5px;color:#555;transform:scaleX(0.886);transform-origin:0 0;">Table</div>
<div class="t" style="left:312.4px;top:20.84px;font-size:12px;color:#8a8a8a;transform:scaleX(0.958);transform-origin:0 0;">from</div>
<svg class="ico" style="left:342px;top:20px" width="11" height="13" viewBox="0 0 11 13"><path d="M1.6 1.5L2.6 12" stroke="#eee" stroke-width="1.6"/><path d="M1.8 1.5Q4.5 3.5 8 2.2L10 2.8L6.8 5.2L9.6 8Q5 7.2 2.2 6.6Z" fill="#d96a6a"/></svg>
<div class="t" style="left:354.4px;top:20.42px;font-size:12.5px;color:#3a87c6;transform:scaleX(0.865);transform-origin:0 0;">OnPrem DW</div>
<svg class="ico" style="left:419px;top:22.5px" width="6" height="9" viewBox="0 0 6 9"><path d="M1.2 1.2L4.6 4.5L1.2 7.8" fill="none" stroke="#6f9cc6" stroke-width="1.2"/></svg>
<div class="t" style="left:427px;top:20.42px;font-size:12.5px;color:#3a87c6;transform:scaleX(0.919);transform-origin:0 0;">MITI-Finance-Dimensional-DW</div>
<svg class="ico" style="left:587.5px;top:22.5px" width="6" height="9" viewBox="0 0 6 9"><path d="M1.2 1.2L4.6 4.5L1.2 7.8" fill="none" stroke="#6f9cc6" stroke-width="1.2"/></svg>
<div class="t" style="left:595.7px;top:20.42px;font-size:12.5px;color:#3a87c6;transform:scaleX(0.887);transform-origin:0 0;">dbo</div>
  <!-- header right icons -->
  <svg class="ico" style="left:1084px;top:16px" width="18" height="20" viewBox="0 0 18 20"><path d="M9 1.2L16.2 3.6V9.5C16.2 14 13 17 9 18.6C5 17 1.8 14 1.8 9.5V3.6Z" fill="none" stroke="#2b80c5" stroke-width="1.8" stroke-linejoin="round"/><path d="M5.6 9.8L8.2 12.2L12.6 7.4" fill="none" stroke="#2b80c5" stroke-width="1.8"/></svg>
  <svg class="ico" style="left:1122px;top:15px" width="18" height="22" viewBox="0 0 18 22"><circle cx="9" cy="8" r="6.6" fill="none" stroke="#2b80c5" stroke-width="1.5"/><circle cx="9" cy="8" r="4.2" fill="none" stroke="#2b80c5" stroke-width="1.5"/><path d="M5 13.5L2 19.5L4.8 19L6.2 21L8.2 15M13 13.5L16 19.5L13.2 19L11.8 21L9.8 15" fill="none" stroke="#2b80c5" stroke-width="1.4" stroke-linejoin="round"/></svg>
  <svg class="ico" style="left:1159px;top:16px" width="20" height="19" viewBox="0 0 20 19"><rect x="0.5" y="8" width="3" height="10" fill="#2b80c5"/><path d="M6 8.5L9.8 2.5C10.5 1.2 12.6 1.6 12.5 3.4L12 7.6H17C18 7.6 18.8 8.6 18.5 9.6L16.8 16.2C16.5 17.2 15.8 17.6 15 17.6H6Z" fill="none" stroke="#2b80c5" stroke-width="1.8" stroke-linejoin="round"/></svg>
  <svg class="ico" style="left:1198px;top:17px" width="18" height="18" viewBox="0 0 18 18"><circle cx="9" cy="9" r="7.7" fill="none" stroke="#2b80c5" stroke-width="1.6"/><rect x="8" y="4.2" width="2" height="6.3" rx="1" fill="#2b80c5"/><circle cx="9" cy="12.9" r="1.15" fill="#2b80c5"/></svg>
  <svg class="ico" style="left:1241px;top:17px" width="8" height="18" viewBox="0 0 8 18"><circle cx="4" cy="3.4" r="2.5" fill="#2b80c5"/><circle cx="4" cy="9.1" r="2.5" fill="#2b80c5"/><circle cx="4" cy="15.2" r="2.5" fill="#2b80c5"/></svg>
  <!-- TABS -->
<div class="a" style="left:4px;top:56px;width:24px;height:24px;border-radius:50%;background:#efefef"></div>
<svg class="ico" style="left:10px;top:61px" width="12" height="14" viewBox="0 0 12 14"><path d="M8 1.5L3 7L8 12.5" fill="none" stroke="#2b80c5" stroke-width="1.7"/></svg>
<div class="t" style="left:48.5px;top:61.32px;font-size:13.8px;color:#666666;transform:scaleX(0.961);transform-origin:0 0;">Overview</div>
<div class="t" style="left:144.2px;top:61.32px;font-size:13.8px;color:#666666;transform:scaleX(0.966);transform-origin:0 0;">Relationships</div>
<div class="t" style="left:265px;top:60.62px;font-size:13.8px;color:#666666;transform:scaleX(0.940);transform-origin:0 0;">Columns</div>
<div class="t" style="left:322.6px;top:60.62px;font-size:13.8px;color:#b5b5b5;transform:scaleX(0.9);transform-origin:0 0">4</div>
<div class="t" style="left:370.4px;top:61.32px;font-size:13.8px;color:#666666;transform:scaleX(0.985);transform-origin:0 0;">Data Quality</div>
<div class="t" style="left:485.3px;top:61.32px;font-size:13.8px;color:#666666;transform:scaleX(0.950);transform-origin:0 0;">Data Sample</div>
<div class="t" style="left:602.5px;top:61.32px;font-size:13.8px;color:#666666;transform:scaleX(0.940);transform-origin:0 0;">Related Reports</div>
<div class="a" style="left:717px;top:50px;width:105px;height:33px;background:#e6f2fb"></div>
<div class="a" style="left:717px;top:81px;width:105px;height:2px;background:#3a97d8"></div>
<div class="t" style="left:737px;top:61.32px;font-size:13.8px;color:#2b80c5;font-weight:bold;transform:scaleX(0.908);transform-origin:0 0;">Lineage</div>
<svg class="ico" style="left:787px;top:60px" width="13" height="13" viewBox="0 0 13 13"><path d="M1 4.2H11M8 1.2L11.2 4.2L8 7.2M12 9H2M5 6L1.8 9L5 12" fill="none" stroke="#b8b8b8" stroke-width="1.6"/></svg>
<div class="t" style="left:843px;top:60.62px;font-size:13.8px;color:#666666;transform:scaleX(0.941);transform-origin:0 0;">Comments</div>
<div class="t" style="left:912.5px;top:60.62px;font-size:13.8px;color:#b5b5b5;transform:scaleX(0.9);transform-origin:0 0">0</div>
<div class="t" style="left:959.8px;top:60.62px;font-size:13.8px;color:#666666;transform:scaleX(0.977);transform-origin:0 0;">Attachments</div>
<div class="t" style="left:1041px;top:60.62px;font-size:13.8px;color:#b5b5b5;transform:scaleX(0.9);transform-origin:0 0">0</div>
<div class="t" style="left:1089.4px;top:61.32px;font-size:13.8px;color:#666666;transform:scaleX(0.968);transform-origin:0 0;">Responsibilities</div>
<div class="t" style="left:1223.4px;top:61.32px;font-size:13.8px;color:#666666;transform:scaleX(1.000);transform-origin:0 0;">Hi</div>
<div class="a" style="left:1234px;top:56px;width:24px;height:24px;border-radius:50%;background:#efefef"></div>
<svg class="ico" style="left:1241px;top:61px" width="12" height="14" viewBox="0 0 12 14"><path d="M3.5 1.5L8.5 7L3.5 12.5" fill="none" stroke="#2b80c5" stroke-width="1.7"/></svg>
  <!-- FILTER BAR -->
<div class="t" style="left:17.70px;top:93.63px;font-size:11.3px;color:#4a4a4a;transform:scaleX(0.924);transform-origin:0 0">Type:</div>
<div class="t" style="left:48.40px;top:93.63px;font-size:11.3px;color:#2b80c5;font-weight:bold;transform:scaleX(0.890);transform-origin:0 0">DATA FLOW</div>
<div class="t" style="left:131.50px;top:93.63px;font-size:11.3px;color:#4a4a4a;transform:scaleX(1.038);transform-origin:0 0">Direction:</div>
<div class="t" style="left:186.00px;top:93.63px;font-size:11.3px;color:#2b80c5;font-weight:bold;transform:scaleX(0.914);transform-origin:0 0">ANY</div>
<div class="t" style="left:232.60px;top:93.63px;font-size:11.3px;color:#4a4a4a;transform:scaleX(1.025);transform-origin:0 0">Control Flow:</div>
<div class="t" style="left:305.90px;top:93.63px;font-size:11.3px;color:#2b80c5;font-weight:bold;transform:scaleX(0.883);transform-origin:0 0">COMPLETE</div>
<div class="t" style="left:386.70px;top:93.63px;font-size:11.3px;color:#4a4a4a;transform:scaleX(0.977);transform-origin:0 0">Columns:</div>
<div class="t" style="left:437.80px;top:93.63px;font-size:11.3px;color:#2b80c5;font-weight:bold;transform:scaleX(1.120);transform-origin:0 0">4</div>
<div class="t" style="left:469.40px;top:93.63px;font-size:11.3px;color:#4a4a4a;transform:scaleX(1.020);transform-origin:0 0">Depth:</div>
<div class="t" style="left:507.50px;top:93.63px;font-size:11.3px;color:#2b80c5;font-weight:bold;transform:scaleX(1.040);transform-origin:0 0">2</div>
<div class="t" style="left:539.50px;top:93.63px;font-size:11.3px;color:#4a4a4a;transform:scaleX(1.010);transform-origin:0 0">Filters:</div>
<div class="t" style="left:579.30px;top:93.63px;font-size:11.3px;color:#2b80c5;font-weight:bold;transform:scaleX(0.892);transform-origin:0 0">NONE</div>
<div class="t" style="left:1081.30px;top:93.63px;font-size:11.3px;color:#4a4a4a;transform:scaleX(0.991);transform-origin:0 0">Display As:</div>
<div class="t" style="left:1141.40px;top:93.63px;font-size:11.3px;color:#2b80c5;font-weight:bold;transform:scaleX(0.899);transform-origin:0 0">DIAGRAM</div>
  <svg class="ico" style="left:1211px;top:93px" width="13" height="13" viewBox="0 0 13 13"><path d="M1 1.5C1 1.2 1.2 1 1.5 1H10L12 3V11.5C12 11.8 11.8 12 11.5 12H1.5C1.2 12 1 11.8 1 11.5Z" fill="none" stroke="#2b80c5" stroke-width="1.5"/><path d="M3.5 1.3V4.5H8.5V1.3M3.5 12V7.5H9.5V12" fill="none" stroke="#2b80c5" stroke-width="1.3"/></svg>
  <svg class="ico" style="left:1240px;top:92px" width="14" height="14" viewBox="0 0 24 24"><path fill="#2b80c5" d="M19.4 13c.04-.33.06-.66.06-1s-.02-.67-.06-1l2.1-1.65c.19-.15.24-.42.12-.64l-2-3.46c-.12-.22-.39-.3-.61-.22l-2.49 1c-.52-.4-1.08-.73-1.69-.98l-.38-2.65C14.46 2.18 14.25 2 14 2h-4c-.25 0-.46.18-.49.42l-.38 2.65c-.61.25-1.17.59-1.69.98l-2.49-1c-.23-.09-.49 0-.61.22l-2 3.46c-.13.22-.07.49.12.64L4.57 11c-.04.33-.07.67-.07 1s.03.67.07 1l-2.11 1.65c-.19.15-.24.42-.12.64l2 3.46c.12.22.39.3.61.22l2.49-1c.52.4 1.08.73 1.69.98l.38 2.65c.03.24.24.42.49.42h4c.25 0 .46-.18.49-.42l.38-2.65c.61-.25 1.17-.59 1.69-.98l2.49 1c.23.09.49 0 .61-.22l2-3.46c.12-.22.07-.49-.12-.64L19.4 13zM12 15.5c-1.93 0-3.5-1.57-3.5-3.5s1.57-3.5 3.5-3.5 3.5 1.57 3.5 3.5-1.57 3.5-3.5 3.5z"/></svg>
  <!-- TOOLBAR -->
  <svg class="ico" style="left:13px;top:128.5px" width="14" height="8" viewBox="0 0 14 8"><path d="M0.9,4 C3,1.2 5,0.8 7,0.8 S11,1.2 13.1,4 C11,6.8 9,7.2 7,7.2 S3,6.8 0.9,4Z" fill="none" stroke="#2b80c5" stroke-width="1.7"/><circle cx="7" cy="4" r="1.9" fill="none" stroke="#2b80c5" stroke-width="1.3"/></svg>
  <svg class="ico" style="left:43.5px;top:125px" width="15" height="16" viewBox="0 0 15 16"><circle cx="6.2" cy="6.2" r="5.2" fill="none" stroke="#2b80c5" stroke-width="1.7"/><path d="M9.8 9.8L13.8 14.3" stroke="#2b80c5" stroke-width="1.8"/><path d="M3.5 6.2H8.9" stroke="#2b80c5" stroke-width="1.6"/></svg>
  <div class="t" style="left:69px;top:127.5px;font-size:11px;color:#4a4a4a">100%</div>
  <svg class="ico" style="left:110.5px;top:125px" width="15" height="16" viewBox="0 0 15 16"><circle cx="6.2" cy="6.2" r="5.2" fill="none" stroke="#2b80c5" stroke-width="1.7"/><path d="M9.8 9.8L13.8 14.3" stroke="#2b80c5" stroke-width="1.8"/><path d="M3.5 6.2H8.9M6.2 3.5V8.9" stroke="#2b80c5" stroke-width="1.6"/></svg>
  <svg class="ico" style="left:138px;top:125px" width="17" height="16" viewBox="0 0 17 16"><path d="M1 5V1H5M12 1H16V5M16 11V15H12M5 15H1V11" fill="none" stroke="#2b80c5" stroke-width="1.6"/><path d="M4.5 4.5L12.5 11.5M12.5 4.5L4.5 11.5" stroke="#2b80c5" stroke-width="1.6"/><path d="M4 4H7.5L4 7.5ZM13 4V7.5L9.5 4ZM13 12H9.5L13 8.5ZM4 12V8.5L7.5 12Z" fill="#2b80c5"/></svg>
  <div class="a" style="left:166px;top:125px;width:1px;height:15px;background:#dcdcdc"></div>
  <svg class="ico" style="left:178px;top:126px" width="15" height="14" viewBox="0 0 15 14"><rect x="1" y="1" width="13" height="12" fill="none" stroke="#2b80c5" stroke-width="1.8"/><path d="M4.5 7H10.5M7.5 4V10" stroke="#2b80c5" stroke-width="1.8"/></svg>
  <svg class="ico" style="left:208px;top:126px" width="15" height="14" viewBox="0 0 15 14"><rect x="1" y="1" width="13" height="12" fill="none" stroke="#2b80c5" stroke-width="1.8"/><path d="M4.5 7H10.5" stroke="#2b80c5" stroke-width="1.8"/></svg>
  <svg class="ico" style="left:245px;top:125px" width="6" height="16" viewBox="0 0 6 16"><circle cx="3" cy="2.6" r="2.1" fill="#2b80c5"/><circle cx="3" cy="7.9" r="2.1" fill="#2b80c5"/><circle cx="3" cy="13.2" r="2.1" fill="#2b80c5"/></svg>
  <div class="a" style="left:253px;top:126px;width:11px;height:10px;border-radius:3px;background:#e4e4e4"></div>
  <div class="t" style="left:256px;top:126.5px;font-size:8.5px;color:#555">1</div>
  <div class="a" style="left:1037px;top:119px;width:120px;height:27px;border-radius:3px;background:#e8e8e8"></div>
  <svg class="ico" style="left:1045px;top:125px" width="15" height="16" viewBox="0 0 15 16"><circle cx="8.5" cy="6.2" r="4.8" fill="none" stroke="#2b80c5" stroke-width="1.6"/><path d="M5.2 9.6L1.5 13.8" stroke="#2b80c5" stroke-width="1.8"/></svg>
  <div class="t" style="left:1069px;top:127px;font-size:12.5px;color:#b0b0b0">Quick find</div>
  <svg class="ico" style="left:1169px;top:125px" width="15" height="15" viewBox="0 0 15 15"><rect x="3.5" y="1" width="8" height="3" fill="#2b80c5"/><path d="M0.5 6.5C0.5 5.4 1.4 4.8 2.5 4.8H12.5C13.6 4.8 14.5 5.4 14.5 6.5V11.5H12V9H3V11.5H0.5Z" fill="#2b80c5"/><rect x="3.5" y="10" width="8" height="4.2" fill="none" stroke="#2b80c5" stroke-width="1.2"/><path d="M5 12H10" stroke="#2b80c5" stroke-width="1"/></svg>
  <svg class="ico" style="left:1199px;top:126px" width="14" height="14" viewBox="0 0 24 24"><path fill="#2b80c5" d="M19.4 13c.04-.33.06-.66.06-1s-.02-.67-.06-1l2.1-1.650c.19-.15.24-.42.12-.64l-2-3.46c-.12-.22-.39-.3-.61-.22l-2.49 1c-.52-.4-1.080-.73-1.69-.98l-.38-2.65C14.46 2.18 14.25 2 14 2h-4c-.25 0-.46.18-.49.42l-.38 2.65c-.61.25-1.17.59-1.69.98l-2.49-1c-.23-.09-.49 0-.61.22l-2 3.46c-.13.22-.07.49.12.64L4.57 11c-.04.33-.07.67-.07 1s.03.67.07 1l-2.11 1.65c-.19.15-.24.42-.12.64l2 3.46c.12.22.39.3.61.22l2.49-1c.52.4 1.08.73 1.69.98l.38 2.65c.03.24.24.42.49.42h4c.25 0 .46-.18.49-.42l.38-2.65c.61-.25 1.17-.59 1.69-.98l2.49 1c.23.09.49 0 .61-.22l2-3.46c.12-.22.07-.49-.12-.64L19.4 13zM12 15.5c-1.930 0-3.5-1.57-3.5-3.5s1.57-3.5 3.5-3.5 3.5 1.57 3.5 3.5-1.57 3.5-3.5 3.5z"/></svg>
  <!-- DETAILS PANEL -->
  <svg class="ico" style="left:1242px;top:126px" width="12" height="15" viewBox="0 0 12 15"><path d="M9.5 1.5L3 7.5L9.5 13.5" fill="none" stroke="#2b80c5" stroke-width="1.6"/></svg>
  <div class="t" style="left:1255px;top:146.5px;font-size:14.5px;color:#2b80c5;font-weight:bold;transform:rotate(90deg);transform-origin:0 0;letter-spacing:-0.1px">Details</div>
  <!-- borders -->
  <div class="a" style="left:0;top:0;width:1px;height:753px;background:#a9a9a9"></div>
  <div class="a" style="left:1266px;top:0;width:1px;height:753px;background:#a9a9a9"></div>
  <svg class="ico" style="left:0;top:0" width="1267" height="753" viewBox="0 0 1267 753"><path d="M0,742 H1.2 V744 A8,8 0 0 0 9.2,752 H1257.8 A8,8 0 0 0 1265.8,744 V742 H1267 V753 H0 Z" fill="#1c3350"/></svg>
</div>
</body></html>
